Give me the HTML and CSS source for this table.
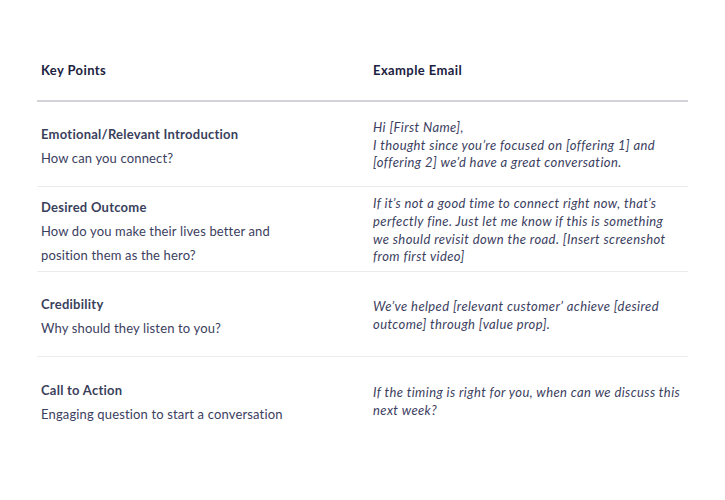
FILE: index.html
```html
<!DOCTYPE html>
<html>
<head>
<meta charset="utf-8">
<link rel="stylesheet" href="styles.css">
</head>
<body>
<div class="table">
  <div class="row head">
    <div class="cell left"><span class="th">Key Points</span></div>
    <div class="cell right"><span class="th">Example Email</span></div>
  </div>
  <div class="row">
    <div class="cell left">
      <div class="title">Emotional/Relevant Introduction</div>
      <div class="sub">How can you connect?</div>
    </div>
    <div class="cell right">
      <div class="email">Hi [First Name],<br>I thought since you’re focused on [offering 1] and<br>[offering 2] we’d have a great conversation.</div>
    </div>
  </div>
  <div class="row">
    <div class="cell left">
      <div class="title">Desired Outcome</div>
      <div class="sub">How do you make their lives better and<br>position them as the hero?</div>
    </div>
    <div class="cell right">
      <div class="email">If it’s not a good time to connect right now, that’s<br>perfectly fine. Just let me know if this is something<br>we should revisit down the road. [Insert screenshot<br>from first video]</div>
    </div>
  </div>
  <div class="row">
    <div class="cell left">
      <div class="title">Credibility</div>
      <div class="sub">Why should they listen to you?</div>
    </div>
    <div class="cell right">
      <div class="email">We’ve helped [relevant customer’ achieve [desired<br>outcome] through [value prop].</div>
    </div>
  </div>
  <div class="row tall last">
    <div class="cell left">
      <div class="title">Call to Action</div>
      <div class="sub">Engaging question to start a conversation</div>
    </div>
    <div class="cell right">
      <div class="email">If the timing is right for you, when can we discuss this<br>next week?</div>
    </div>
  </div>
</div>
</body>
</html>
```
FILE: styles.css
```css
html, body {
  margin: 0;
  padding: 0;
  background: #ffffff;
}
body {
  font-family: "Lato", "Open Sans", sans-serif;
  color: #3b4060;
}
.table {
  margin: 40px 37px 0 37px;
  width: 651px;
}
.row {
  display: grid;
  grid-template-columns: 336px 315px;
  height: 85px;
  border-bottom: 1px solid #ececef;
  box-sizing: border-box;
}
.row.tall {
  height: 86px;
}
.row.head {
  height: 62px;
  border-bottom: 2px solid #d2d3d8;
}
.row.last {
  border-bottom: none;
}
.cell {
  display: flex;
  flex-direction: column;
  justify-content: center;
  padding-top: 3px;
}
.head .cell {
  padding-top: 0;
}
.cell.left {
  padding-left: 4px;
}
.th {
  font-weight: 700;
  font-size: 13px;
  letter-spacing: 0.4px;
  color: #1c2140;
}
.title {
  font-weight: 700;
  font-size: 13px;
  line-height: 24px;
  letter-spacing: 0.25px;
  color: #3a3f5c;
}
.sub {
  font-size: 13px;
  line-height: 24px;
  letter-spacing: 0.15px;
  color: #3b4060;
}
.email {
  font-style: italic;
  font-size: 13px;
  line-height: 17.7px;
  letter-spacing: 0.4px;
  color: #3b4060;
}
```
